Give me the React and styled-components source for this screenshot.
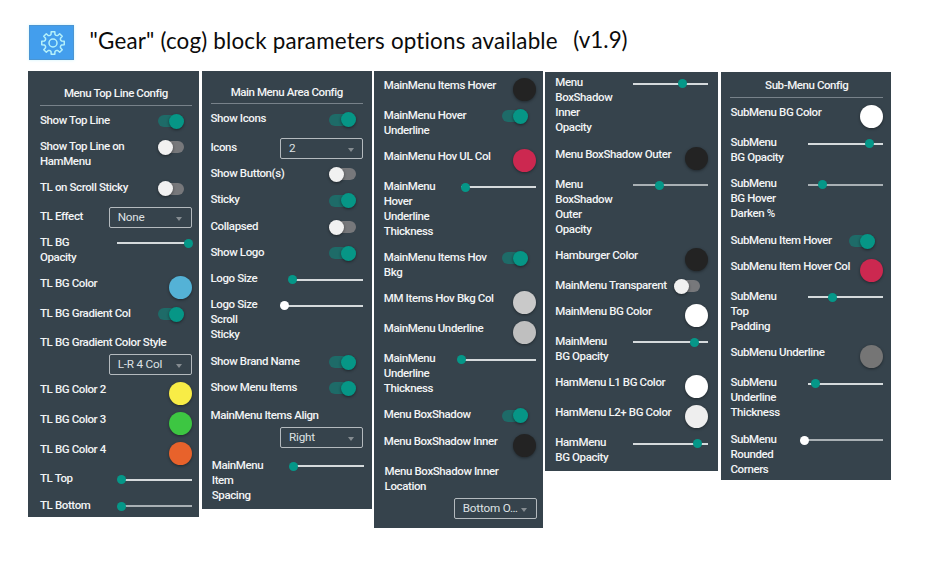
import React from "react";
import styled, { createGlobalStyle } from "styled-components";

const GlobalStyle = createGlobalStyle`
  * { box-sizing: border-box; }
  body { margin: 0; background: #fff; overflow: hidden; }
`;

const Page = styled.main`
  width: 938px;
  height: 567px;
  padding: 25px 0 0 28px;
  background: #fff;
  font-family: Roboto, "Liberation Sans", sans-serif;
`;

const Header = styled.header`
  display: flex;
  align-items: flex-start;
  height: 46px;
  padding-left: 1px;
`;

const GearTile = styled.div`
  display: flex;
  align-items: center;
  justify-content: center;
  width: 45px;
  height: 35px;
  padding-left: 2px;
  background: #439eed;
  border: 1px solid #4b95d2;
  box-shadow: 0 0 3px #cdf3fb;
`;

const Heading = styled.h1`
  margin: 2px 0 0 15.5px;
  font: 400 22.4px/28px Lato, "Open Sans", sans-serif;
  letter-spacing: 0.18px;
  color: #0b0b0b;
  white-space: nowrap;
`;

const Version = styled.span`
  margin: 1px 0 0 15.5px;
  font: 400 22.4px/28px Lato, "Open Sans", sans-serif;
  color: #0b0b0b;
`;

const Panels = styled.div`
  display: flex;
  align-items: flex-start;
`;

const Panel = styled.section`
  flex: none;
  width: ${(p) => p.$w}px;
  height: ${(p) => p.$h}px;
  margin: ${(p) => p.$top || 0}px ${(p) => p.$gap}px 0 0;
  padding: ${(p) => p.$pad};
  background: #36434c;
`;

const PanelTitle = styled.h2`
  display: flex;
  justify-content: center;
  align-items: flex-end;
  height: ${(p) => p.$h}px;
  margin: 0 0 ${(p) => p.$after}px;
  padding-bottom: 3.5px;
  border-bottom: 1px solid #78828a;
  font-size: 11.5px;
  line-height: 15px;
  font-weight: 500;
  letter-spacing: -0.42px;
  color: #f2f4f5;
`;

const Row = styled.div`
  display: flex;
  flex-direction: ${(p) => (p.$stacked ? "column" : "row")};
  justify-content: ${(p) => (p.$stacked ? "flex-start" : "space-between")};
  align-items: ${(p) => (p.$stacked ? "stretch" : "flex-start")};
  height: ${(p) => p.$h}px;
  margin: 0 ${(p) => -(p.$shift || 0)}px 0 ${(p) => p.$shift || 0}px;
`;

const Label = styled.span`
  flex: none;
  padding-top: 0.4px;
  font-size: 11.5px;
  line-height: 15px;
  font-weight: 500;
  letter-spacing: -0.39px;
  color: #f2f4f5;
  white-space: pre;
`;

const Toggle = styled.span`
  flex: none;
  display: flex;
  justify-content: ${(p) => (p.$on ? "flex-end" : "flex-start")};
  align-items: center;
  width: 26.5px;
  height: 12px;
  margin: 3px 7.5px 0 auto;
  border-radius: 6px;
  background: ${(p) => (p.$on ? "#1e6b68" : "#77787b")};

  &::before {
    content: "";
    width: 15px;
    height: 15px;
    flex: none;
    border-radius: 50%;
    background: ${(p) => (p.$on ? "#069686" : "#f1f1f1")};
    box-shadow: 0 1px 3px rgba(0, 0, 0, 0.45);
  }
`;

const Swatch = styled.span`
  flex: none;
  width: 23px;
  height: 23px;
  margin-top: 0.5px;
  margin-left: auto;
  border-radius: 50%;
  background: ${(p) => p.$c};
  box-shadow: 0 1px 3px rgba(0, 0, 0, 0.4);
`;

const SliderTrack = styled.span`
  position: relative;
  flex: none;
  width: ${(p) => p.$w}px;
  height: 2px;
  margin-top: 8px;
  margin-left: auto;
  background: ${(p) => (p.$dim ? "#a9b0b4" : "#d5dadc")};
`;

const SliderKnob = styled.span`
  position: absolute;
  top: -3.5px;
  left: ${(p) => p.$at - 4.5}px;
  width: 9px;
  height: 9px;
  border-radius: 50%;
  background: ${(p) => (p.$zero ? "#fff" : "#059788")};
`;

const SelectBox = styled.span`
  flex: none;
  display: flex;
  align-items: center;
  justify-content: space-between;
  align-self: ${(p) => (p.$stacked ? "flex-end" : "flex-start")};
  width: 83px;
  height: 21px;
  margin-top: ${(p) => (p.$stacked ? 4.3 : -1.2)}px;
  padding: 0 8.5px 0 8px;
  border: 1px solid #b4babe;
  border-radius: 2px;
  font-size: 11.7px;
  line-height: 15px;
  font-weight: 400;
  letter-spacing: -0.2px;
  color: #dfe2e4;
  white-space: nowrap;
`;

const Caret = styled.i`
  flex: none;
  width: 0;
  height: 0;
  margin-top: 3px;
  border: 3.5px solid transparent;
  border-top: 4px solid #858c91;
  border-bottom: 0;
`;

function Gear() {
  const pts = [];
  for (let i = 0; i < 8; i++) {
    const a = (i * Math.PI) / 4 - Math.PI / 2;
    [[-0.31, 8.3], [-0.22, 8.9], [-0.16, 11.4], [0.16, 11.4], [0.22, 8.9], [0.31, 8.3]].forEach(([d, r]) =>
      pts.push(`${(13 + r * Math.cos(a + d)).toFixed(2)},${(13 + r * Math.sin(a + d)).toFixed(2)}`)
    );
  }
  return (
    <svg width="26" height="26" viewBox="0 0 26 26" fill="none" stroke="#b5f1fa" strokeWidth="1.5" strokeLinejoin="round">
      <polygon points={pts.join(" ")} />
      <circle cx="13" cy="13" r="4" />
    </svg>
  );
}

function Slider({ w = 75, at, zero, dim }) {
  return (
    <SliderTrack $w={w} $dim={dim}>
      <SliderKnob $at={at} $zero={zero} />
    </SliderTrack>
  );
}

function Select({ value, stacked }) {
  return (
    <SelectBox $stacked={stacked}>
      {value}
      <Caret />
    </SelectBox>
  );
}

function Field({ item }) {
  return (
    <Row $h={item.h} $stacked={item.stacked} $shift={item.shift}>
      <Label>{item.label}</Label>
      {"on" in item && <Toggle $on={item.on} />}
      {item.color && <Swatch $c={item.color} />}
      {item.slider && <Slider {...item.slider} />}
      {item.select && <Select value={item.select} stacked={item.stacked} />}
    </Row>
  );
}

const panels = [
  {
    w: 171, h: 446, gap: 3, pad: "0 7.3px 0 12px",
    title: "Menu Top Line Config", titleH: 34.5, after: 6.7,
    rows: [
      { label: "Show Top Line", h: 26.3, on: true },
      { label: "Show Top Line on\nHamMenu", h: 41.3, on: false },
      { label: "TL on Scroll Sticky", h: 28.4, on: false },
      { label: "TL Effect", h: 26.3, select: "None" },
      { label: "TL BG\nOpacity", h: 41, slider: { at: 72 } },
      { label: "TL BG Color", h: 30, color: "#54b2d6" },
      { label: "TL BG Gradient Col", h: 28.7, on: true },
      { label: "TL BG Gradient Color Style", h: 47.3, select: "L-R 4 Col", stacked: true },
      { label: "TL BG Color 2", h: 30, color: "#f8ec46" },
      { label: "TL BG Color 3", h: 30, color: "#3dc642" },
      { label: "TL BG Color 4", h: 29.3, color: "#e8622b" },
      { label: "TL Top", h: 26.4, slider: { w: 71, at: 0.5 } },
      { label: "TL Bottom", h: 20, slider: { w: 71, at: 0.5, dim: true } },
    ],
  },
  {
    w: 169.7, h: 437.7, gap: 2.3, pad: "0 8.7px 0 8.5px",
    title: "Main Menu Area Config", titleH: 33, after: 6.8,
    rows: [
      { label: "Show Icons", h: 28.4, on: true },
      { label: "Icons", h: 26.3, select: "2" },
      { label: "Show Button(s)", h: 26.3, on: false },
      { label: "Sticky", h: 26.4, on: true },
      { label: "Collapsed", h: 26.3, on: false },
      { label: "Show Logo", h: 26.3, on: true },
      { label: "Logo Size", h: 26, slider: { w: 71, at: 0.5 } },
      { label: "Logo Size\nScroll\nSticky", h: 56.4, slider: { w: 78.5, at: 0.2, zero: true } },
      { label: "Show Brand Name", h: 26.3, on: true },
      { label: "Show Menu Items", h: 28.3, on: true },
      { label: "MainMenu Items Align", h: 49.4, select: "Right", stacked: true },
      { label: "MainMenu\nItem\nSpacing", h: 45, shift: 1.3, slider: { w: 71, at: 0.5 } },
    ],
  },
  {
    w: 168.7, h: 456.7, gap: 2.3, pad: "6.2px 6.7px 0 9.8px",
    rows: [
      { label: "MainMenu Items Hover", h: 30, color: "#232323" },
      { label: "MainMenu Hover\nUnderline", h: 41.3, on: true },
      { label: "MainMenu Hov UL Col", h: 30, color: "#cc2850" },
      { label: "MainMenu\nHover\nUnderline\nThickness", h: 71, slider: { at: 5 } },
      { label: "MainMenu Items Hov\nBkg", h: 41.3, on: true },
      { label: "MM Items Hov Bkg Col", h: 30, color: "#c9c9c9" },
      { label: "MainMenu Underline", h: 30.2, color: "#bfbfbf" },
      { label: "MainMenu\nUnderline\nThickness", h: 56, slider: { w: 74, at: 0 } },
      { label: "Menu BoxShadow", h: 26.5, on: true },
      { label: "Menu BoxShadow Inner", h: 30.3, color: "#232323" },
      { label: "Menu BoxShadow Inner\nLocation", h: 56, shift: 0.8, select: "Bottom O…", stacked: true },
    ],
  },
  {
    w: 173, h: 399, gap: 3, top: 0.6, pad: "3.4px 10px 0 10.3px",
    rows: [
      { label: "Menu\nBoxShadow\nInner\nOpacity", h: 71.2, slider: { at: 49.3 } },
      { label: "Menu BoxShadow Outer", h: 30, color: "#232323" },
      { label: "Menu\nBoxShadow\nOuter\nOpacity", h: 71.3, slider: { at: 26.8, dim: true } },
      { label: "Hamburger Color", h: 30, color: "#232323" },
      { label: "MainMenu Transparent", h: 26.3, on: false },
      { label: "MainMenu BG Color", h: 29.7, color: "#fff" },
      { label: "MainMenu\nBG Opacity", h: 41.3, slider: { at: 61.3 } },
      { label: "HamMenu L1 BG Color", h: 30, color: "#fff" },
      { label: "HamMenu L2+ BG Color", h: 30, color: "#eee" },
      { label: "HamMenu\nBG Opacity", h: 30, slider: { at: 64.3 } },
    ],
  },
  {
    w: 170, h: 408.7, gap: 0, top: 0.6, pad: "0 8px 0 9.5px",
    title: "Sub-Menu Config", titleH: 26.4, after: 6.8,
    rows: [
      { label: "SubMenu BG Color", h: 30, color: "#fff" },
      { label: "SubMenu\nBG Opacity", h: 41, slider: { at: 61.3 } },
      { label: "SubMenu\nBG Hover\nDarken %", h: 56.4, slider: { at: 14.7, dim: true } },
      { label: "SubMenu Item Hover", h: 26.3, on: true },
      { label: "SubMenu Item Hover Col", h: 30, color: "#cc2850" },
      { label: "SubMenu\nTop\nPadding", h: 56.3, slider: { at: 24.3 } },
      { label: "SubMenu Underline", h: 30, color: "#757575" },
      { label: "SubMenu\nUnderline\nThickness", h: 56.4, slider: { at: 8 } },
      { label: "SubMenu\nRounded\nCorners", h: 41, slider: { w: 78.5, at: 0, zero: true, dim: true } },
    ],
  },
];

export default function App() {
  return (
    <Page>
      <GlobalStyle />
      <Header>
        <GearTile>
          <Gear />
        </GearTile>
        <Heading>"Gear" (cog) block parameters options available</Heading>
        <Version>(v1.9)</Version>
      </Header>
      <Panels>
        {panels.map((p, i) => (
          <Panel key={i} $w={p.w} $h={p.h} $gap={p.gap} $top={p.top} $pad={p.pad}>
            {p.title && (
              <PanelTitle $h={p.titleH} $after={p.after}>
                {p.title}
              </PanelTitle>
            )}
            {p.rows.map((item) => (
              <Field key={item.label} item={item} />
            ))}
          </Panel>
        ))}
      </Panels>
    </Page>
  );
}
